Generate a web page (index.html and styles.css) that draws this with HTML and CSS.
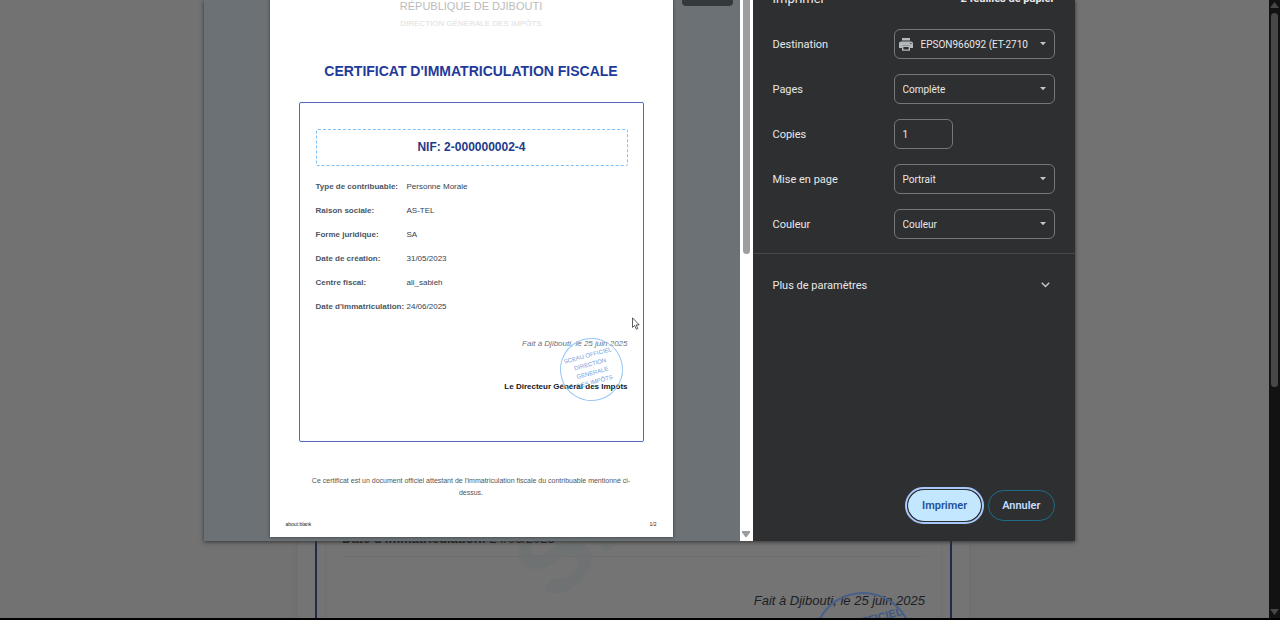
FILE: index.html
```html
<!DOCTYPE html>
<html lang="fr">
<head>
<meta charset="utf-8">
<title>Certificat d'immatriculation fiscale</title>
<link rel="stylesheet" href="styles.css">
</head>
<body>
<div class="window">
  <main class="backdrop">
    <article class="sheet">
      <div class="certificate">
        <div class="certificate-inner">
          <div class="watermark" aria-hidden="true">SP</div>
          <div class="sheet-row"><b>Date d'immatriculation:</b> <span>24/06/2025</span></div>
          <div class="sheet-sign">
            <p class="sheet-place">Fait à Djibouti, le 25 juin 2025</p>
            <div class="stamp stamp-large">SCEAU OFFICIEL</div>
          </div>
        </div>
      </div>
    </article>
  </main>
  <div class="page-scroll">
    <svg width="9" height="6" viewBox="0 0 9 6"><path d="M4.500 0L9 6H0z" fill="#484848"/></svg>
    <div class="page-thumb"></div>
    <svg class="to-end" width="9" height="6" viewBox="0 0 9 6"><path d="M0 0h9L4.500 6z" fill="#484848"/></svg>
  </div>
</div>

<div class="overlay">
  <section class="dialog" role="dialog" aria-label="Imprimer">
    <div class="preview">
      <article class="paper">
        <header class="paper-head">
          <p class="republic">RÉPUBLIQUE DE DJIBOUTI</p>
          <p class="direction">DIRECTION GÉNÉRALE DES IMPÔTS</p>
        </header>
        <h1 class="title">CERTIFICAT D'IMMATRICULATION FISCALE</h1>
        <div class="frame">
          <div class="nif">NIF: 2-000000002-4</div>
          <dl class="facts">
            <dt>Type de contribuable:</dt><dd>Personne Morale</dd>
            <dt>Raison sociale:</dt><dd>AS-TEL</dd>
            <dt>Forme juridique:</dt><dd>SA</dd>
            <dt>Date de création:</dt><dd>31/05/2023</dd>
            <dt>Centre fiscal:</dt><dd>ali_sabieh</dd>
            <dt>Date d'immatriculation:</dt><dd>24/06/2025</dd>
          </dl>
          <div class="sign">
            <p class="place">Fait à Djibouti, le 25 juin 2025</p>
            <p class="director">Le Directeur Général des Impôts</p>
            <div class="stamp stamp-small">SCEAU OFFICIEL<br>DIRECTION<br>GENERALE<br>DES IMPÔTS</div>
          </div>
        </div>
        <p class="notice">Ce certificat est un document officiel attestant de l'immatriculation fiscale du contribuable mentionné ci-dessus.</p>
        <footer class="paper-foot"><span>about:blank</span><span>1/2</span></footer>
      </article>
      <div class="page-pill"></div>
    </div>
    <div class="preview-scroll">
      <div class="preview-thumb"></div>
      <svg width="8" height="6" viewBox="0 0 8 6"><path d="M0 0h8v1.500L4.600 6H3.400L0 1.500z" fill="#9c9c9c"/></svg>
    </div>
    <aside class="settings">
      <header class="settings-head"><h2>Imprimer</h2><b>2 feuilles de papier</b></header>
      <form class="form">
        <div class="row">
          <label for="dest">Destination</label>
          <div class="control">
            <svg class="printer" width="14" height="13" viewBox="0 0 14 13"><path d="M3 0h8v2.600H3zM2 3.400h10a2 2 0 0 1 2 2V10h-3V7.500H3V10H0V5.400a2 2 0 0 1 2-2z" fill="#b4b9bd"/><path d="M3.700 8.200h6.600v3.900H3.700z" fill="none" stroke="#b4b9bd" stroke-width="1.400"/><circle cx="11.800" cy="5.400" r=".7" fill="#2e2f31"/></svg>
            <select id="dest" class="with-icon"><option>EPSON966092 (ET-2710</option></select>
            <svg class="caret" width="6" height="4" viewBox="0 0 6 4"><path d="M0 0h6L3 3.200z" fill="#c4c7c5"/></svg>
          </div>
        </div>
        <div class="row">
          <label for="pages">Pages</label>
          <div class="control">
            <select id="pages"><option>Complète</option></select>
            <svg class="caret" width="6" height="4" viewBox="0 0 6 4"><path d="M0 0h6L3 3.200z" fill="#c4c7c5"/></svg>
          </div>
        </div>
        <div class="row">
          <label for="copies">Copies</label>
          <div class="control"><input id="copies" type="text" inputmode="numeric" value="1"></div>
        </div>
        <div class="row">
          <label for="layout">Mise en page</label>
          <div class="control">
            <select id="layout"><option>Portrait</option></select>
            <svg class="caret" width="6" height="4" viewBox="0 0 6 4"><path d="M0 0h6L3 3.200z" fill="#c4c7c5"/></svg>
          </div>
        </div>
        <div class="row">
          <label for="color">Couleur</label>
          <div class="control">
            <select id="color"><option>Couleur</option></select>
            <svg class="caret" width="6" height="4" viewBox="0 0 6 4"><path d="M0 0h6L3 3.200z" fill="#c4c7c5"/></svg>
          </div>
        </div>
      </form>
      <button class="more" type="button"><span>Plus de paramètres</span>
        <svg width="9" height="6" viewBox="0 0 9 6"><path d="M.8.800l3.700 3.700L8.200.800" fill="none" stroke="#c4c7c5" stroke-width="1.500"/></svg>
      </button>
      <div class="actions">
        <button class="btn primary" type="button">Imprimer</button>
        <button class="btn" type="button">Annuler</button>
      </div>
    </aside>
  </section>
  <svg class="pointer" width="8" height="13" viewBox="0 0 8 13"><path d="M.5.800v9.600l2.200-2 1.600 3.800 1.500-.7-1.600-3.600h3z" fill="#fff" stroke="#333" stroke-width=".8"/></svg>
</div>
</body>
</html>
```

FILE: styles.css
```css
* { box-sizing: border-box; }

body, p, h1, h2, dl, dd { margin: 0; }

body {
  position: relative;
  height: 100vh;
  overflow: hidden;
  background: #000;
  font-family: "Liberation Sans", Arial, sans-serif;
}

/* Dimmed page behind the dialog */
.window {
  display: flex;
  height: 100%;
  border-bottom: 2px solid #000;
}

.backdrop {
  flex: 1;
  overflow: hidden;
  padding: 0 17px 0 15px;
  background: #727272;
}

.sheet {
  max-width: 671px;
  min-height: 100%;
  margin: 0 auto;
  padding: 0 17px;
  background: #747474;
  box-shadow: 0 0 4px #6a6a6a;
}

.certificate {
  padding: 0 8px;
  border: solid #1f2b47;
  border-width: 0 2px;
}

.certificate-inner {
  position: relative;
  height: 100vh;
  padding: 526px 16px 0;
  border: solid #707070;
  border-width: 0 1px;
}

.watermark {
  position: absolute;
  left: 185px;
  top: 482px;
  color: #6f7272;
  font-size: 100px;
  font-weight: bold;
  line-height: 100px;
  transform: rotate(-45deg);
}

.sheet-row {
  position: relative;
  height: 31px;
  border-bottom: 1px solid #6e6e6e;
  color: #14181f;
  font-size: 13px;
  line-height: 26px;
}

.sheet-sign {
  position: relative;
  padding-top: 32px;
  text-align: right;
}

.sheet-place {
  color: #1c2024;
  font-size: 13px;
  font-style: italic;
  line-height: 24px;
}

.page-scroll {
  display: flex;
  flex-direction: column;
  align-items: center;
  gap: 5px;
  width: 11px;
  padding: 2px 0 3px;
  background: #121212;
}

.page-thumb {
  width: 7px;
  height: 61%;
  border-radius: 4px;
  background: #484848;
}

.to-end { margin-top: auto; }

/* Round seal, laid over the signature */
.stamp {
  position: absolute;
  border-radius: 50%;
  text-align: center;
  transform: rotate(-15deg);
}

.stamp-large {
  top: 35px;
  right: 12px;
  width: 100px;
  height: 100px;
  padding: 21px 0;
  border: 2px solid #46608a;
  color: #3d5985;
  font-size: 11px;
  font-weight: bold;
  line-height: 14px;
  white-space: nowrap;
}

.stamp-small {
  top: 1px;
  right: 5px;
  width: 63px;
  height: 63px;
  padding: 12px 0;
  border: 1px solid #93c5f5;
  color: #6f9ee0;
  font-size: 6px;
  line-height: 9px;
  white-space: nowrap;
}

/* Print dialog */
.overlay {
  position: absolute;
  inset: 0;
  display: flex;
  align-items: flex-start;
  justify-content: center;
  padding-right: 2px;
}

.dialog {
  display: flex;
  width: 100%;
  max-width: 871px;
  height: 541px;
  overflow: hidden;
  background: #2e2f31;
  box-shadow: 0 1px 4px #333;
}

.preview {
  position: relative;
  flex: 1;
  padding: 0 67px 0 66px;
  background: #6b7175;
}

.paper {
  display: flex;
  flex-direction: column;
  height: 537px;
  padding: 0 29px;
  background: #fff;
  box-shadow: 0 0 3px #33383b;
}

.paper-head { text-align: center; }

.republic {
  color: #b9bcbc;
  font-size: 11px;
  line-height: 13px;
}

.direction {
  padding-top: 4px;
  color: #dcdedf;
  font-size: 8px;
  line-height: 14px;
}

.title {
  padding-top: 31px;
  color: #1e3a9a;
  font-size: 14px;
  line-height: 18px;
  text-align: center;
  white-space: nowrap;
}

.frame {
  height: 340px;
  margin-top: 22px;
  padding: 26px 15px 0 16px;
  border: 1px solid #5468c4;
  border-radius: 2px;
}

.nif {
  border: 1px dashed #7cc0fa;
  border-radius: 2px;
  color: #1e3a8a;
  font-size: 12px;
  font-weight: bold;
  line-height: 35px;
  text-align: center;
}

.facts {
  display: grid;
  grid-template-columns: 91px 1fr;
  padding-top: 9px;
  color: #374151;
  font-size: 8px;
  line-height: 24px;
  white-space: nowrap;
}

.facts dt {
  color: #4b5563;
  font-weight: bold;
}

.sign {
  position: relative;
  margin-top: 18px;
  color: #111827;
  font-size: 8px;
  text-align: right;
}

.place {
  color: #6b7280;
  font-style: italic;
  line-height: 14px;
}

.director {
  padding-top: 29px;
  font-weight: bold;
  line-height: 14px;
}

.notice {
  padding: 33px 10px 0;
  color: #555;
  font-size: 7px;
  line-height: 12px;
  text-align: center;
}

.paper-foot {
  display: flex;
  justify-content: space-between;
  margin: auto -13px 9px;
  color: #222;
  font-size: 5px;
  line-height: 8px;
}

.page-pill {
  position: absolute;
  top: 0;
  right: 7px;
  width: 51px;
  height: 6px;
  border-radius: 0 0 4px 4px;
  background: #343a3b;
}

.preview-scroll {
  display: flex;
  flex-direction: column;
  justify-content: space-between;
  align-items: center;
  width: 13px;
  padding-bottom: 4px;
  background: #fff;
}

.preview-thumb {
  width: 7px;
  height: 254px;
  border-radius: 0 0 4px 4px;
  background: #9e9e9e;
}

.settings {
  display: flex;
  flex-direction: column;
  width: 322px;
  background: #2e2f31;
  color: #e8e8e8;
  font-family: Roboto, "Open Sans", sans-serif;
  font-size: 11px;
}

.settings-head {
  display: flex;
  justify-content: space-between;
  align-items: flex-end;
  height: 7px;
  padding: 0 20px;
  line-height: 16px;
}

.settings-head h2 {
  font-size: 13px;
  font-weight: normal;
}

.form {
  display: grid;
  gap: 15px;
  padding: 22px 20px 14px;
  border-bottom: 1px solid #47484a;
}

.row {
  display: flex;
  justify-content: space-between;
  align-items: center;
  height: 30px;
}

.control {
  position: relative;
  display: flex;
  align-items: center;
  width: 161px;
  height: 30px;
}

.control select,
.control input {
  appearance: none;
  width: 100%;
  height: 100%;
  padding: 0 18px 0 8px;
  border: 1px solid #757778;
  border-radius: 6px;
  background: transparent;
  color: #e8e8e8;
  font: inherit;
  font-size: 10px;
}

.control input {
  width: 59px;
  padding-right: 8px;
}

.control .with-icon { padding-left: 26px; }

.caret {
  position: absolute;
  right: 9px;
  pointer-events: none;
}

.printer {
  position: absolute;
  left: 5px;
}

.more {
  display: flex;
  justify-content: space-between;
  align-items: center;
  height: 62px;
  padding: 0 25px 0 20px;
  border: 0;
  background: none;
  color: inherit;
  font: inherit;
}

.actions {
  display: flex;
  justify-content: flex-end;
  gap: 7px;
  margin-top: auto;
  padding: 0 20px 20px;
}

.btn {
  height: 31px;
  padding: 0 13px;
  border: 1px solid #1d6d86;
  border-radius: 16px;
  background: transparent;
  color: #c2dcff;
  font: inherit;
  font-weight: 600;
}

.btn.primary {
  border-color: #c2e7ff;
  background: #c2e7ff;
  color: #24509c;
  outline: 2px solid #a8c7fa;
  outline-offset: 1px;
}

.pointer {
  position: absolute;
  left: 632px;
  top: 317px;
}
```
